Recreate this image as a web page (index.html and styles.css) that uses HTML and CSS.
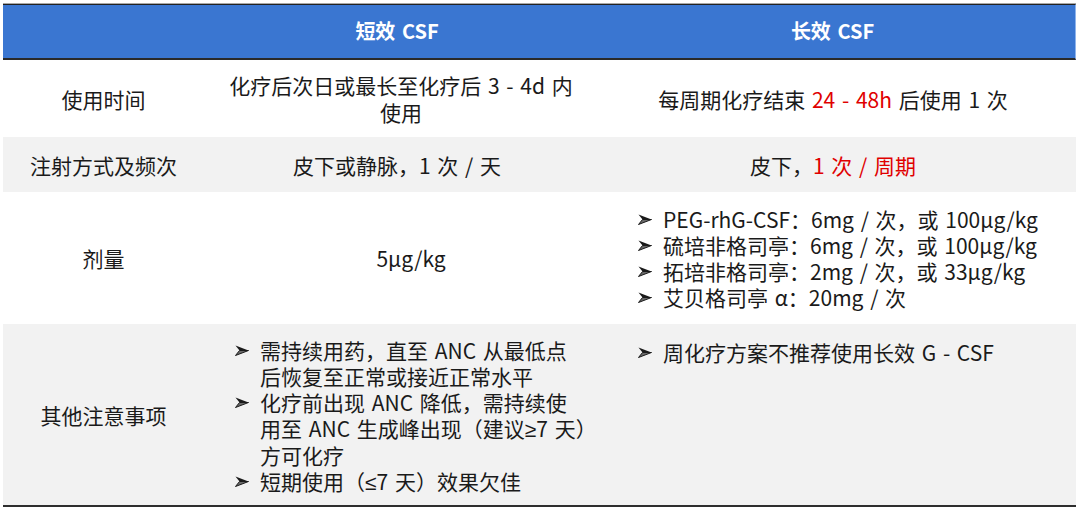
FILE: index.html
```html
<!DOCTYPE html>
<html lang="zh-CN">
<head>
<meta charset="utf-8">
<title>CSF 对比</title>
<link rel="stylesheet" href="styles.css">
</head>
<body>
<div class="table">
  <div class="cell head c1"></div>
  <div class="cell head c2"><span>短效 CSF</span></div>
  <div class="cell head c3"><span>长效 CSF</span></div>

  <div class="cell c1"><span>使用时间</span></div>
  <div class="cell c2 two shift-s"><span>化疗后次日或最长至化疗后 3 - 4d 内<br>使用</span></div>
  <div class="cell c3"><span>每周期化疗结束 <span class="red">24 - 48h</span> 后使用 1 次</span></div>

  <div class="cell gray c1"><span>注射方式及频次</span></div>
  <div class="cell gray c2"><span>皮下或静脉，1 次 / 天</span></div>
  <div class="cell gray c3"><span>皮下，<span class="red">1 次 / 周期</span></span></div>

  <div class="cell c1"><span>剂量</span></div>
  <div class="cell c2 shift"><span>5μg/kg</span></div>
  <div class="cell c3 list list3">
    <div class="items">
      <div class="item"><svg class="bul" viewBox="0 0 14 11" width="14" height="11"><polygon points="0.5,0.5 13.5,5.5 4.5,5.5" fill="#1a1a1a"/><polygon points="4.5,5.5 13.5,5.5 0.5,10.5" fill="#6a6a6a" stroke="#1a1a1a" stroke-width="1"/></svg><span>PEG-rhG-CSF：6mg / 次，或 100μg/kg</span></div>
      <div class="item"><svg class="bul" viewBox="0 0 14 11" width="14" height="11"><polygon points="0.5,0.5 13.5,5.5 4.5,5.5" fill="#1a1a1a"/><polygon points="4.5,5.5 13.5,5.5 0.5,10.5" fill="#6a6a6a" stroke="#1a1a1a" stroke-width="1"/></svg><span>硫培非格司亭：6mg / 次，或 100μg/kg</span></div>
      <div class="item"><svg class="bul" viewBox="0 0 14 11" width="14" height="11"><polygon points="0.5,0.5 13.5,5.5 4.5,5.5" fill="#1a1a1a"/><polygon points="4.5,5.5 13.5,5.5 0.5,10.5" fill="#6a6a6a" stroke="#1a1a1a" stroke-width="1"/></svg><span>拓培非格司亭：2mg / 次，或 33μg/kg</span></div>
      <div class="item"><svg class="bul" viewBox="0 0 14 11" width="14" height="11"><polygon points="0.5,0.5 13.5,5.5 4.5,5.5" fill="#1a1a1a"/><polygon points="4.5,5.5 13.5,5.5 0.5,10.5" fill="#6a6a6a" stroke="#1a1a1a" stroke-width="1"/></svg><span>艾贝格司亭 α：20mg / 次</span></div>
    </div>
  </div>

  <div class="cell gray last c1"><span>其他注意事项</span></div>
  <div class="cell gray last c2 list list2">
    <div class="items">
      <div class="item"><svg class="bul" viewBox="0 0 14 11" width="14" height="11"><polygon points="0.5,0.5 13.5,5.5 4.5,5.5" fill="#1a1a1a"/><polygon points="4.5,5.5 13.5,5.5 0.5,10.5" fill="#6a6a6a" stroke="#1a1a1a" stroke-width="1"/></svg><span>需持续用药，直至 ANC 从最低点<br>后恢复至正常或接近正常水平</span></div>
      <div class="item"><svg class="bul" viewBox="0 0 14 11" width="14" height="11"><polygon points="0.5,0.5 13.5,5.5 4.5,5.5" fill="#1a1a1a"/><polygon points="4.5,5.5 13.5,5.5 0.5,10.5" fill="#6a6a6a" stroke="#1a1a1a" stroke-width="1"/></svg><span>化疗前出现 ANC 降低，需持续使<br>用至 ANC 生成峰出现（建议<span class="sym">≥</span>7 天）<br>方可化疗</span></div>
      <div class="item"><svg class="bul" viewBox="0 0 14 11" width="14" height="11"><polygon points="0.5,0.5 13.5,5.5 4.5,5.5" fill="#1a1a1a"/><polygon points="4.5,5.5 13.5,5.5 0.5,10.5" fill="#6a6a6a" stroke="#1a1a1a" stroke-width="1"/></svg><span>短期使用（<span class="sym">≤</span>7 天）效果欠佳</span></div>
    </div>
  </div>
  <div class="cell gray last c3 list list3 top">
    <div class="items">
      <div class="item"><svg class="bul" viewBox="0 0 14 11" width="14" height="11"><polygon points="0.5,0.5 13.5,5.5 4.5,5.5" fill="#1a1a1a"/><polygon points="4.5,5.5 13.5,5.5 0.5,10.5" fill="#6a6a6a" stroke="#1a1a1a" stroke-width="1"/></svg><span>周化疗方案不推荐使用长效 G - CSF</span></div>
    </div>
  </div>
</div>
</body>
</html>
```

FILE: styles.css
```css
html, body {
  margin: 0;
  padding: 0;
  background: #ffffff;
}

body {
  font-family: "Noto Sans CJK SC", "Noto Sans", sans-serif;
  font-size: 21px;
  color: #1a1a1a;
  word-spacing: 2px;
}

.table {
  margin: 3px 0 0 3px;
  width: 1073px;
  display: grid;
  grid-template-columns: 201px 386px 486px;
  grid-template-rows: 56px 77px 55px 132px 183px;
  border-top: 1px solid #a8a8a8;
}

.cell {
  box-sizing: border-box;
  display: flex;
  align-items: center;
  justify-content: center;
  text-align: center;
  white-space: nowrap;
  line-height: 26px;
}

.head {
  background: #3a76d1;
  color: #ffffff;
  font-weight: 700;
  font-size: 20px;
  border-top: 1px solid #222222;
  border-bottom: 2px solid #2a2a2a;
  padding-bottom: 2px;
}

.head.c3 {
  border-right: 1px solid #8fb4ec;
}

.two {
  line-height: 27px;
}

.shift {
  padding-left: 28px;
}

.shift-s {
  padding-left: 8px;
}

.gray {
  background: #f2f2f2;
}

.last {
  border-bottom: 2px solid #2e2e2e;
}

.red {
  color: #e00000;
}

.sym {
  font-family: "Noto Sans", sans-serif;
}

.list {
  justify-content: flex-start;
  text-align: left;
}

.list2 {
  padding-left: 31px;
  padding-top: 2px;
}

.list3 {
  padding-left: 48px;
}

.list.top {
  align-items: flex-start;
  padding-top: 15px;
}

.items {
  display: flex;
  flex-direction: column;
}

.item {
  display: flex;
  align-items: flex-start;
}

.bul {
  flex: none;
  margin: 8px 11px 0 0;
}
```
